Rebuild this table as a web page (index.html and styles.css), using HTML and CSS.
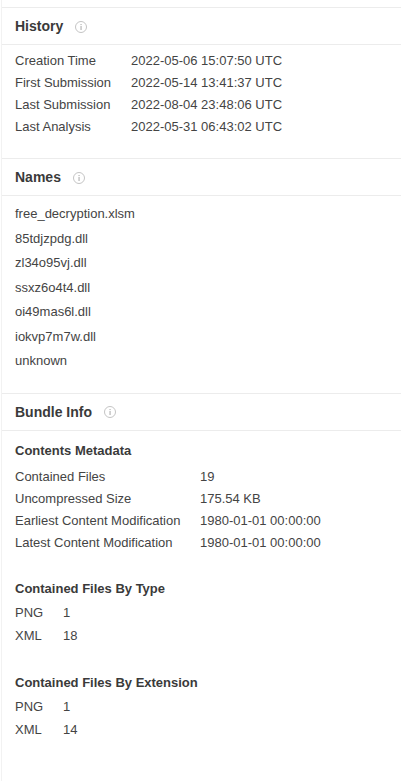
FILE: index.html
```html
<!DOCTYPE html>
<html>
<head>
<meta charset="utf-8">
<link rel="stylesheet" href="styles.css">
</head>
<body>
<div class="page">
  <section class="card">
    <div class="card-head">
      <h2 class="card-title">History</h2>
      <span class="info"><svg viewBox="0 0 12 12" width="12" height="12"><circle cx="6" cy="6" r="5.5" fill="none" stroke="#c4c4c4" stroke-width="1"/><rect x="5.5" y="5" width="1.1" height="4" fill="#b0b0b0"/><rect x="5.5" y="3" width="1.1" height="1.1" fill="#b0b0b0"/></svg></span>
    </div>
    <div class="card-body">
      <div class="kv kv-history">
        <div>Creation Time</div><div>2022-05-06 15:07:50 UTC</div>
        <div>First Submission</div><div>2022-05-14 13:41:37 UTC</div>
        <div>Last Submission</div><div>2022-08-04 23:48:06 UTC</div>
        <div>Last Analysis</div><div>2022-05-31 06:43:02 UTC</div>
      </div>
    </div>
  </section>
  <section class="card">
    <div class="card-head">
      <h2 class="card-title">Names</h2>
      <span class="info"><svg viewBox="0 0 12 12" width="12" height="12"><circle cx="6" cy="6" r="5.5" fill="none" stroke="#c4c4c4" stroke-width="1"/><rect x="5.5" y="5" width="1.1" height="4" fill="#b0b0b0"/><rect x="5.5" y="3" width="1.1" height="1.1" fill="#b0b0b0"/></svg></span>
    </div>
    <div class="card-body names-body">
      <ul class="names">
        <li>free_decryption.xlsm</li>
        <li>85tdjzpdg.dll</li>
        <li>zl34o95vj.dll</li>
        <li>ssxz6o4t4.dll</li>
        <li>oi49mas6l.dll</li>
        <li>iokvp7m7w.dll</li>
        <li>unknown</li>
      </ul>
    </div>
  </section>
  <section class="card">
    <div class="card-head">
      <h2 class="card-title">Bundle Info</h2>
      <span class="info"><svg viewBox="0 0 12 12" width="12" height="12"><circle cx="6" cy="6" r="5.5" fill="none" stroke="#c4c4c4" stroke-width="1"/><rect x="5.5" y="5" width="1.1" height="4" fill="#b0b0b0"/><rect x="5.5" y="3" width="1.1" height="1.1" fill="#b0b0b0"/></svg></span>
    </div>
    <div class="card-body bundle">
      <div class="group">
        <h3 class="sub">Contents Metadata</h3>
        <div class="kv kv-meta">
          <div>Contained Files</div><div>19</div>
          <div>Uncompressed Size</div><div>175.54 KB</div>
          <div>Earliest Content Modification</div><div>1980-01-01 00:00:00</div>
          <div>Latest Content Modification</div><div>1980-01-01 00:00:00</div>
        </div>
      </div>
      <div class="group">
        <h3 class="sub sub-tight">Contained Files By Type</h3>
        <div class="kv kv-type">
          <div>PNG</div><div>1</div>
          <div>XML</div><div>18</div>
        </div>
      </div>
      <div class="group">
        <h3 class="sub sub-tight">Contained Files By Extension</h3>
        <div class="kv kv-type">
          <div>PNG</div><div>1</div>
          <div>XML</div><div>14</div>
        </div>
      </div>
    </div>
  </section>
</div>
</body>
</html>
```

FILE: styles.css
```css
html, body {
  margin: 0;
  padding: 0;
  background: #ffffff;
}
body {
  font-family: "Liberation Sans", Arial, sans-serif;
  font-size: 13px;
  color: #444444;
}
.page {
  padding-top: 7px;
  margin-left: 1px;
  border-left: 1px solid #f2f2f2;
  min-height: 774px;
}
.card {
  border-top: 1px solid #ececec;
}
.card-head {
  display: flex;
  align-items: center;
  height: 36px;
  padding: 0 13px;
  border-bottom: 1px solid #ececec;
}
.card-title {
  margin: 0;
  font-size: 14px;
  font-weight: bold;
  color: #3a3a3a;
}
.info {
  display: flex;
  margin-left: 12px;
  margin-top: 1px;
}
.card-body {
  padding: 5px 13px 20px;
}
.names-body {
  padding-top: 6px;
  padding-bottom: 19px;
}
.kv {
  display: grid;
  line-height: 22px;
}
.kv-history {
  grid-template-columns: 116px auto;
}
.kv-meta {
  grid-template-columns: 185px auto;
}
.kv-type {
  grid-template-columns: 48px auto;
  line-height: 23.5px;
}
.names {
  list-style: none;
  margin: 0;
  padding: 0;
}
.names li {
  line-height: 24.5px;
}
.bundle {
  padding-top: 10px;
  padding-bottom: 24px;
}
.group + .group {
  margin-top: 25px;
}
.sub {
  margin: 0 0 5px;
  font-size: 13px;
  font-weight: bold;
  line-height: 20px;
  color: #3a3a3a;
}
.sub-tight {
  margin-bottom: 2px;
}
```
